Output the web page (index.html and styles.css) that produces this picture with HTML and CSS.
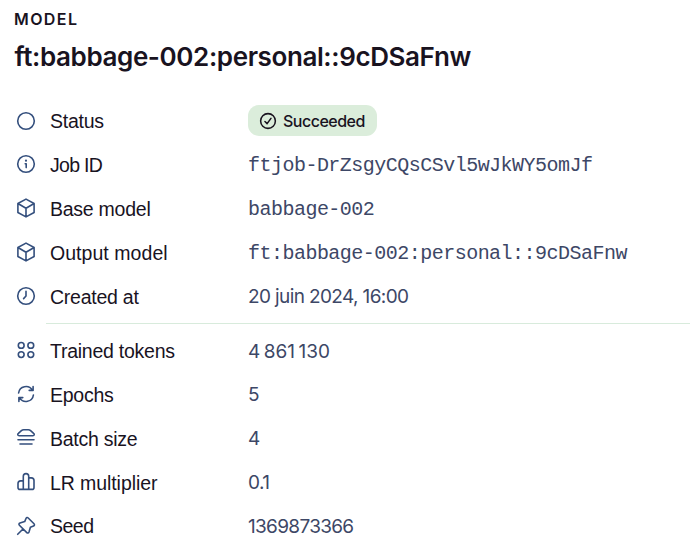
FILE: index.html
```html
<!DOCTYPE html>
<html lang="en">
<head>
<meta charset="utf-8">
<title>Model</title>
<link rel="stylesheet" href="styles.css">
</head>
<body>
<main class="panel">
  <header class="header">
    <div class="eyebrow">MODEL</div>
    <h1 class="title">ft:babbage-002:personal::9cDSaFnw</h1>
  </header>

  <section class="group">
    <div class="row">
      <svg class="icon" viewBox="0 0 20 20"><circle cx="10" cy="10" r="8.3"/></svg>
      <span class="label">Status</span>
      <span class="badge"><svg class="check" viewBox="0 0 20 20"><circle cx="10" cy="10" r="8.2"/><path d="M6.6 10.6 9 12.9l4.3-5.8"/></svg>Succeeded</span>
    </div>
    <div class="row">
      <svg class="icon" viewBox="0 0 20 20"><circle cx="10" cy="10" r="8.3"/><path d="M9.2 9.7H10.2V13.6"/><circle class="dot" cx="10" cy="6.7" r="1.1"/></svg>
      <span class="label tighter">Job ID</span>
      <span class="value mono">ftjob-DrZsgyCQsCSvl5wJkWY5omJf</span>
    </div>
    <div class="row">
      <svg class="icon" viewBox="0 0 20 20"><path d="M10 1.1 18.1 5.5V14.5L10 18.9 1.9 14.5V5.5ZM1.9 5.5 10 10.2l8.1-4.7M10 10.2V18.9"/></svg>
      <span class="label">Base model</span>
      <span class="value mono">babbage-002</span>
    </div>
    <div class="row">
      <svg class="icon" viewBox="0 0 20 20"><path d="M10 1.1 18.1 5.5V14.5L10 18.9 1.9 14.5V5.5ZM1.9 5.5 10 10.2l8.1-4.7M10 10.2V18.9"/></svg>
      <span class="label wide">Output model</span>
      <span class="value mono">ft:babbage-002:personal::9cDSaFnw</span>
    </div>
    <div class="row">
      <svg class="icon" viewBox="0 0 20 20"><circle cx="10" cy="10" r="8.3"/><path d="M10 5.2V10L7.6 12.6"/></svg>
      <span class="label">Created at</span>
      <span class="value date">20 juin 2024, 16:00</span>
    </div>
  </section>

  <hr class="divider">

  <section class="group">
    <div class="row">
      <svg class="icon" viewBox="0 0 20 20"><circle cx="5.2" cy="5.4" r="2.9"/><circle cx="14.8" cy="5.4" r="2.9"/><circle cx="5.2" cy="14.6" r="2.9"/><circle cx="14.8" cy="14.6" r="2.9"/></svg>
      <span class="label">Trained tokens</span>
      <span class="value tokens">4&#8239;861&#8239;130</span>
    </div>
    <div class="row">
      <svg class="icon" viewBox="0 0 20 20"><path d="M2.6 9A7.4 7.4 0 0 1 16.3 6.2M17.1 2.6V6.4H13.2M17.4 11A7.4 7.4 0 0 1 3.7 13.8M2.9 17.4V13.6H6.8"/></svg>
      <span class="label">Epochs</span>
      <span class="value">5</span>
    </div>
    <div class="row">
      <svg class="icon" viewBox="0 0 20 20"><path d="M3.2 7.8H16.8C18.4 7.8 18.7 6.2 17.6 5.4L14.6 2.7C13.8 2 13.2 1.8 12.3 1.8H7.7C6.8 1.8 6.2 2 5.4 2.7L2.4 5.4C1.3 6.2 1.6 7.8 3.2 7.8ZM2 11.8H18M4 16H16"/></svg>
      <span class="label">Batch size</span>
      <span class="value">4</span>
    </div>
    <div class="row">
      <svg class="icon" viewBox="0 0 20 20"><path d="M7.3 17.4V4.3a2.7 2.7 0 0 1 5.4 0V17.4M7.3 8.9H4.7A2.7 2.7 0 0 0 2 11.6V15.4A2 2 0 0 0 4 17.4H16A2 2 0 0 0 18 15.4V8.6A2.7 2.7 0 0 0 15.3 5.9H12.7"/></svg>
      <span class="label even">LR multiplier</span>
      <span class="value decimal">0.1</span>
    </div>
    <div class="row">
      <svg class="icon" viewBox="0 0 20 20"><path d="M1.7 18.3 7 13M12.2 2 18 7.8C18.8 8.6 18.5 9.6 17.5 10L14.4 11.3 13 16C12.6 17.1 11.6 17.4 10.8 16.6L3.4 9.2C2.6 8.4 2.9 7.4 4 7L8.7 5.6 10 2.5C10.4 1.5 11.4 1.2 12.2 2Z"/></svg>
      <span class="label tight">Seed</span>
      <span class="value">1369873366</span>
    </div>
  </section>
</main>
</body>
</html>
```
FILE: styles.css
```css
* { box-sizing: border-box; }

body {
  margin: 0;
  background: #fff;
  color: #19131f;
  font-family: "Liberation Sans", Arial, sans-serif;
}

.panel { height: 551px; overflow: hidden; }

.header { height: 99.5px; padding: 9px 0 0 14px; }

.eyebrow {
  font: 600 16px/20px Inter, sans-serif;
  letter-spacing: 1.4px;
}

.title {
  margin: 12px 0 0 0.5px;
  font: 600 26px/32px Inter, sans-serif;
  letter-spacing: -0.39px;
}

.row {
  display: grid;
  grid-template-columns: 20px 198px 1fr;
  column-gap: 14px;
  align-items: center;
  height: 43.8px;
  padding-left: 16px;
}

.icon {
  width: 20px;
  height: 20px;
  margin-top: -1.6px;
  fill: none;
  stroke: #344f7d;
  stroke-width: 1.6;
  stroke-linecap: round;
  stroke-linejoin: round;
}

.dot { fill: #344f7d; stroke: none; }

.label, .value {
  font-size: 19.5px;
  line-height: 28px;
  letter-spacing: -0.25px;
  white-space: nowrap;
}

.wide { letter-spacing: 0.05px; }
.even { letter-spacing: -0.08px; }
.tight { letter-spacing: -0.5px; }
.tighter { letter-spacing: -0.7px; }

.value {
  margin-left: -14px;
  padding-top: 1px;
  color: #3d4766;
  font-family: Inter, sans-serif;
  font-size: 19px;
  letter-spacing: -0.68px;
}

.date { letter-spacing: -0.62px; }
.tokens { letter-spacing: -1.3px; }
.decimal { letter-spacing: -0.5px; }

.mono {
  padding-top: 2px;
  font-family: "Liberation Mono", monospace;
  font-size: 20px;
  letter-spacing: -0.52px;
}

.badge {
  display: flex;
  align-items: center;
  justify-self: start;
  height: 31px;
  margin: -1.6px 0 0 -14px;
  padding: 1px 12px 0 11px;
  border-radius: 11px;
  background: #dbeddb;
  font: 500 16px/31px Inter, sans-serif;
  letter-spacing: -0.5px;
}

.check {
  width: 18px;
  height: 18px;
  margin: -1px 6px 0 0;
  fill: none;
  stroke: #19131f;
  stroke-width: 1.7;
  stroke-linecap: round;
  stroke-linejoin: round;
}

.divider {
  height: 1px;
  margin: 4.5px 0 5.3px 46px;
  border: 0;
  background: #d8ebdc;
}
```
